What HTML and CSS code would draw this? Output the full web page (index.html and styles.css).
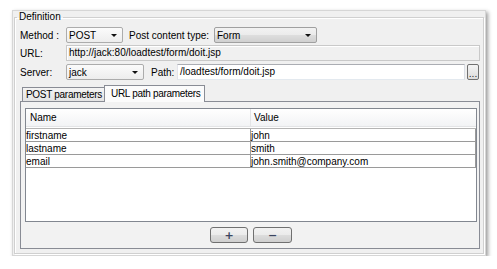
FILE: index.html
```html
<!DOCTYPE html>
<html lang="en">
<head>
    <meta charset="UTF-8">
    <meta name="viewport" content="width=device-width, initial-scale=1.0">
    <title>Request Definition</title>
    <link rel="stylesheet" href="styles.css">
</head>
<body>
    <div class="window">
        <fieldset class="group">
            <legend>Definition</legend>

            <!-- Method / content type -->
            <div class="form-row row-method">
                <span class="label">Method :</span>
                <div class="combo combo-method"><span>POST</span><i class="arrow"></i></div>
                <span class="label-type">Post content type:</span>
                <div class="combo combo-type"><span>Form</span><i class="arrow"></i></div>
            </div>

            <div class="form-row row-url">
                <span class="label">URL:</span>
                <div class="field field-disabled">http://jack:80/loadtest/form/doit.jsp</div>
            </div>

            <div class="form-row row-server">
                <span class="label">Server:</span>
                <div class="combo combo-server"><span>jack</span><i class="arrow"></i></div>
                <span class="label-path">Path:</span>
                <div class="field">/loadtest/form/doit.jsp</div>
                <button class="browse">...</button>
            </div>

            <!-- Parameter tabs -->
            <div class="tabs">
                <div class="tab">POST parameters</div>
                <div class="tab active">URL path parameters</div>
            </div>
            <div class="pane">
                <div class="grid">
                    <div class="grid-head">
                        <div class="col-name">Name</div>
                        <div class="col-value">Value</div>
                    </div>
                    <div class="grid-row first">
                        <div class="col-name">firstname</div>
                        <div class="col-value">john</div>
                    </div>
                    <div class="grid-row">
                        <div class="col-name">lastname</div>
                        <div class="col-value">smith</div>
                    </div>
                    <div class="grid-row">
                        <div class="col-name">email</div>
                        <div class="col-value">john.smith@company.com</div>
                    </div>
                </div>
                <div class="buttons">
                    <button class="btn btn-add">+</button>
                    <button class="btn btn-remove">&minus;</button>
                </div>
            </div>
        </fieldset>
    </div>
</body>
</html>
```

FILE: styles.css
```css
* {
    box-sizing: border-box;
}

body {
    margin: 0;
    background-color: #fff;
    font-family: "Liberation Sans", Arial, sans-serif;
    font-size: 10px;
    color: #000;
}

/* Window frame */
.window {
    width: 474px;
    margin: 10px 0 0 12px;
    padding: 0 1px 1px;
    border: 1px solid #d6d6d6;
    background-color: #f0f0f0;
    box-shadow: 2px 2px 4px rgba(0, 0, 0, 0.4);
}

.group {
    margin: 0;
    min-width: 0;
    padding: 0 3px 2px 5px;
    border: 1px solid #d0d0d0;
    box-shadow: inset 1px 1px 0 #fff, 1px 1px 0 #fff;
}

.group legend {
    padding: 0 2px;
    margin-left: -3px;
    line-height: 12px;
}

/* Form rows */
.form-row {
    display: flex;
    align-items: center;
    height: 16px;
}

.row-method {
    margin-top: 4px;
}

.row-url {
    margin-top: 2px;
}

.row-server {
    margin-top: 3px;
}

.label {
    width: 46px;
    flex: none;
}

.label-type {
    width: 85px;
    margin-left: 6px;
    flex: none;
}

.label-path {
    width: 26px;
    margin-left: 7px;
    flex: none;
}

.combo {
    display: flex;
    align-items: center;
    justify-content: space-between;
    height: 16px;
    padding: 0 5px 0 2px;
    border: 1px solid #acacac;
    border-radius: 2px;
    background: linear-gradient(#fbfbfb, #ededed);
    flex: none;
}

.combo-method {
    width: 57px;
}

.combo-type {
    width: 103px;
    background: linear-gradient(#f2f2f2 0%, #ebebeb 50%, #dedede 50%, #d0d0d0 100%);
    border-color: #a0a0a0;
}

.combo-server {
    width: 78px;
}

.arrow {
    width: 0;
    height: 0;
    border-left: 3px solid transparent;
    border-right: 3px solid transparent;
    border-top: 3px solid #111;
    margin-top: 1px;
}

.field {
    flex: 1;
    height: 16px;
    line-height: 14px;
    padding: 0 2px;
    border: 1px solid #abadb3;
    border-color: #abadb3 #dbdfe6 #e3e9ef #e2e3ea;
    background-color: #fff;
    white-space: nowrap;
    overflow: hidden;
}

.field-disabled {
    background-color: #f0f0f0;
    border-color: #c9c9c9;
    box-shadow: inset 1px 1px 0 #fff;
}

.browse {
    width: 12px;
    height: 16px;
    margin: 0 1px 0 2px;
    padding: 0;
    border: 1px solid #707070;
    border-radius: 2px;
    background: linear-gradient(#f4f4f4, #dcdcdc);
    font: 9px "DejaVu Sans", sans-serif;
    line-height: 19px;
    color: #222;
    overflow: hidden;
}

/* Tabs */
.tabs {
    display: flex;
    align-items: flex-end;
    margin: 5px 0 0 2px;
}

.tab {
    width: 83px;
    height: 14px;
    padding-left: 3px;
    line-height: 14px;
    letter-spacing: -0.3px;
    border: 1px solid #898c95;
    border-bottom: none;
    background: linear-gradient(#f4f4f4, #e4e4e4);
    white-space: nowrap;
}

.tab.active {
    position: relative;
    z-index: 1;
    width: 101px;
    height: 17px;
    margin-left: -1px;
    margin-bottom: -1px;
    padding-left: 6px;
    line-height: 15px;
    background: #fbfbfb;
}

.pane {
    margin-bottom: 2px;
    padding: 6px 2px 5px 4px;
    border: 1px solid #898c95;
    background-color: #f2f2f2;
}

/* Parameter grid */
.grid {
    height: 114px;
    border: 1px solid #828790;
    background-color: #fff;
}

.grid-head {
    display: flex;
    height: 18px;
    line-height: 18px;
    margin-bottom: 1px;
    border-bottom: 1px solid #e3e4e6;
    background: linear-gradient(#fff, #f2f3f5);
}

.grid-head .col-name {
    padding-left: 4px;
    border-right: 1px solid #e3e4e6;
}

.grid-head .col-value {
    padding-left: 3px;
}

.col-name {
    width: 225px;
    flex: none;
}

.col-value {
    flex: 1;
}

.grid-row {
    display: flex;
    height: 13px;
    line-height: 13px;
    border-bottom: 1px solid #9a9a9a;
}

.grid-row.first {
    height: 14px;
    border-top: 1px solid #b4b4b4;
}

.grid-row .col-name {
    border-right: 1px solid #9a9a9a;
}

.grid-row .col-value {
    border-right: 1px solid #9a9a9a;
}

/* Add / remove buttons */
.buttons {
    display: flex;
    justify-content: center;
    gap: 5px;
    margin-top: 5px;
}

.btn {
    width: 38px;
    height: 16px;
    padding: 0;
    border: 1px solid #707070;
    border-radius: 3px;
    background: linear-gradient(#f2f2f2 0%, #ebebeb 50%, #dddddd 50%, #cfcfcf 100%);
    font: bold 11px "DejaVu Sans", sans-serif;
    line-height: 13px;
    color: #3b4660;
}

.btn-remove {
    width: 39px;
}
```
